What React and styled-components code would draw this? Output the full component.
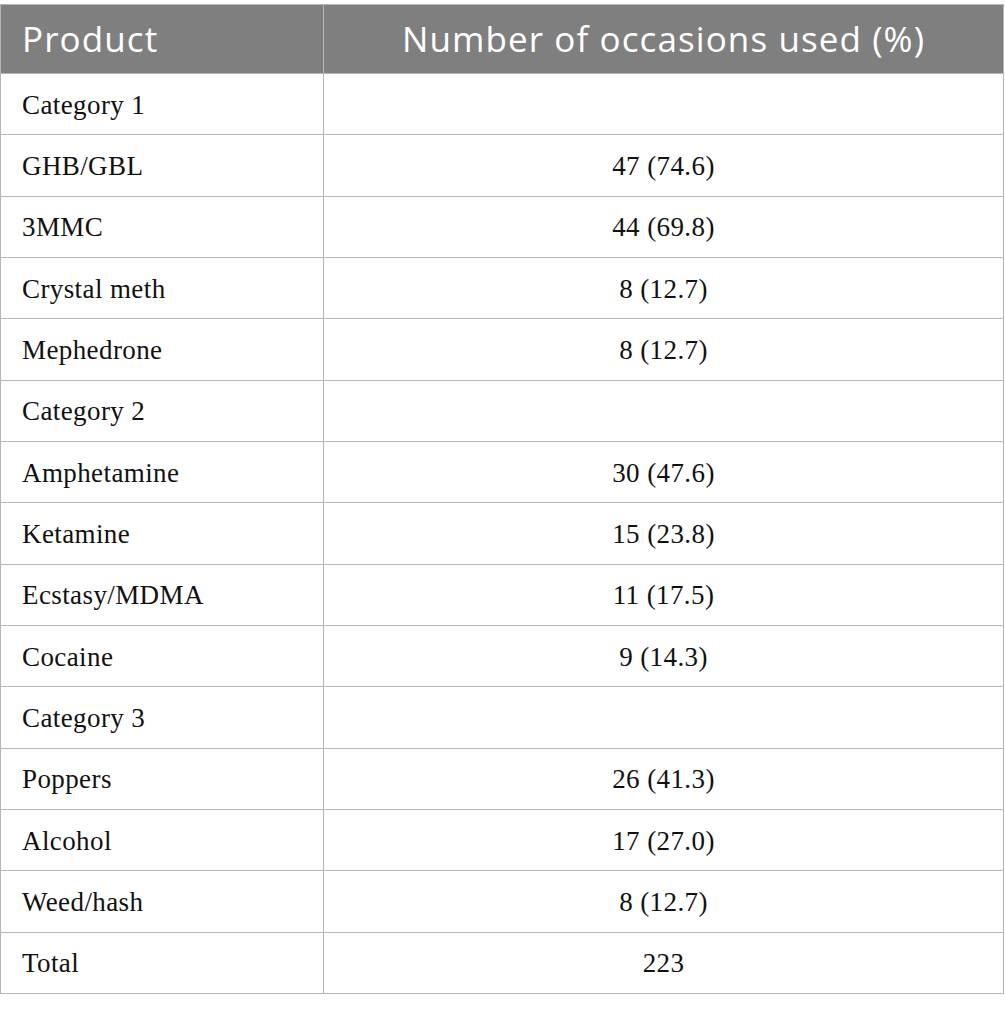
import React from "react";
import styled, { createGlobalStyle } from "styled-components";

const Global = createGlobalStyle`
  html, body { margin: 0; padding: 0; background: #fff; }
`;

const Wrap = styled.div`
  padding: 4px 1px 0 0;
`;

const Table = styled.table`
  width: 1004px;
  border-collapse: collapse;
  table-layout: fixed;
  border: 1px solid #b5b5b5;
`;

const HeadCell = styled.th`
  background: #7f7f7f;
  color: #fff;
  font-family: "Open Sans", "Noto Sans", sans-serif;
  font-weight: 400;
  font-size: 35px;
  letter-spacing: 1.1px;
  height: 69px;
  padding: 0 0 2px ${(p) => (p.$center ? 0 : 21)}px;
  text-align: ${(p) => (p.$center ? "center" : "left")};
  border: 1px solid #b5b5b5;
  box-sizing: border-box;
  vertical-align: middle;
`;

const Cell = styled.td`
  font-family: "Liberation Serif", "DejaVu Serif", serif;
  font-size: 27px;
  letter-spacing: 0.4px;
  color: #111;
  height: 61.33px;
  padding: 2px 0 0 ${(p) => (p.$center ? 0 : 21)}px;
  text-align: ${(p) => (p.$center ? "center" : "left")};
  border: 1px solid #b5b5b5;
  vertical-align: middle;
  box-sizing: border-box;
`;

const rows = [
  ["Category 1", ""],
  ["GHB/GBL", "47 (74.6)"],
  ["3MMC", "44 (69.8)"],
  ["Crystal meth", "8 (12.7)"],
  ["Mephedrone", "8 (12.7)"],
  ["Category 2", ""],
  ["Amphetamine", "30 (47.6)"],
  ["Ketamine", "15 (23.8)"],
  ["Ecstasy/MDMA", "11 (17.5)"],
  ["Cocaine", "9 (14.3)"],
  ["Category 3", ""],
  ["Poppers", "26 (41.3)"],
  ["Alcohol", "17 (27.0)"],
  ["Weed/hash", "8 (12.7)"],
  ["Total", "223"],
];

export default function App() {
  return (
    <Wrap>
      <Global />
      <Table>
        <colgroup>
          <col style={{ width: 323 }} />
          <col />
        </colgroup>
        <thead>
          <tr>
            <HeadCell>Product</HeadCell>
            <HeadCell $center>Number of occasions used (%)</HeadCell>
          </tr>
        </thead>
        <tbody>
          {rows.map(([a, b], i) => (
            <tr key={i}>
              <Cell>{a}</Cell>
              <Cell $center>{b}</Cell>
            </tr>
          ))}
        </tbody>
      </Table>
    </Wrap>
  );
}
